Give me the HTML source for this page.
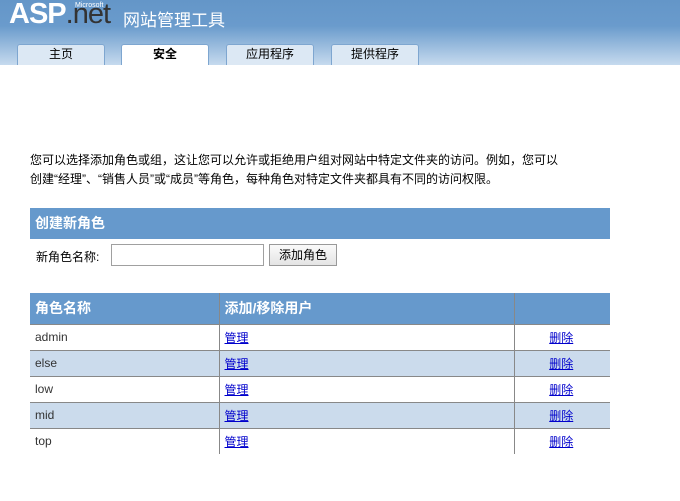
<!DOCTYPE html>
<html><head><meta charset="utf-8"><style>
*{margin:0;padding:0;box-sizing:border-box}
body{width:680px;height:501px;background:#fff;font-family:"Liberation Sans","Noto Sans CJK SC",sans-serif;font-size:12px;color:#000;position:relative;overflow:hidden}
.hdr{position:absolute;left:0;top:0;width:680px;height:65px;background:linear-gradient(#6496c8 0%,#6a9bcc 40%,#c6daee 100%)}
.logo{position:absolute;left:9px;top:-2px;font:bold 29px "Liberation Sans",sans-serif;color:#fff;letter-spacing:-1px;line-height:32px}
.logo span{color:#333;font-weight:normal}
.ms{position:absolute;left:75px;top:2px;font-size:7px;color:#fff}
.ttl{position:absolute;left:123px;top:6px;font-size:17px;color:#fff}
.tab{position:absolute;top:44px;width:88px;height:21px;background:#dce8f4;border:1px solid #7ea6d0;border-bottom:none;border-radius:3px 3px 0 0;text-align:center;font-size:12px;line-height:19px}
.tab.a{background:#fff;font-weight:bold}
.intro{position:absolute;left:30px;top:151px;line-height:19px;width:600px}
.bar{position:absolute;left:30px;top:208px;width:580px;height:31px;background:#6699cc;color:#fff;font-weight:bold;font-size:14px;line-height:30px;padding-left:5px}
.lbl{position:absolute;left:36px;top:248px}
.inp{position:absolute;left:111px;top:244px;width:153px;height:22px;border:1px solid #a0a0a0}
.btn{position:absolute;left:269px;top:244px;width:68px;height:22px;border:1px solid #999;background:linear-gradient(#fafafa,#e4e4e4);text-align:center;line-height:20px}
table{position:absolute;left:30px;top:293px;width:580px;border-collapse:collapse}
th{background:#6699cc;color:#fff;font-size:14px;text-align:left;height:31px;padding-left:5px;border-left:1px solid #888;border-bottom:1px solid #888}
td{height:26px;padding-left:5px;border-left:1px solid #888;border-bottom:1px solid #888;color:#333}
tr th:first-child,tr td:first-child{border-left:none}
tr.alt td{background:#cbdbec}
a{color:#00c;text-decoration:underline}
td.c{text-align:center;padding-left:0;padding-right:2px}
</style></head><body>
<div class="hdr">
<div class="logo">ASP<span>.net</span></div><div class="ms">Microsoft</div>
<div class="ttl">网站管理工具</div>
<div class="tab" style="left:17px">主页</div>
<div class="tab a" style="left:121px">安全</div>
<div class="tab" style="left:226px">应用程序</div>
<div class="tab" style="left:331px">提供程序</div>
</div>
<div class="intro">您可以选择添加角色或组，这让您可以允许或拒绝用户组对网站中特定文件夹的访问。例如，您可以<br>创建“经理”、“销售人员”或“成员”等角色，每种角色对特定文件夹都具有不同的访问权限。</div>
<div class="bar">创建新角色</div>
<div class="lbl">新角色名称:</div>
<div class="inp"></div>
<div class="btn">添加角色</div>
<table>
<tr><th style="width:189px">角色名称</th><th style="width:295px">添加/移除用户</th><th></th></tr>
<tr><td>admin</td><td><a>管理</a></td><td class="c"><a>删除</a></td></tr>
<tr class="alt"><td>else</td><td><a>管理</a></td><td class="c"><a>删除</a></td></tr>
<tr><td>low</td><td><a>管理</a></td><td class="c"><a>删除</a></td></tr>
<tr class="alt"><td>mid</td><td><a>管理</a></td><td class="c"><a>删除</a></td></tr>
<tr><td style="border-bottom:none">top</td><td style="border-bottom:none"><a>管理</a></td><td class="c" style="border-bottom:none"><a>删除</a></td></tr>
</table>
</body></html>
